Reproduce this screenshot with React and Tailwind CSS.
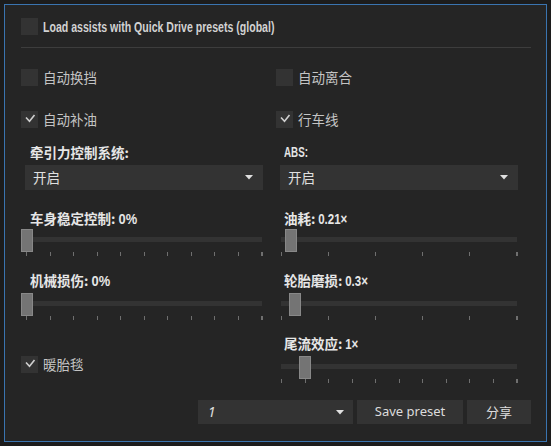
import React from 'react';

const lat = { fontFamily: '"Liberation Sans", Arial, sans-serif' };
const cjk = { fontFamily: '"Noto Sans CJK SC", "Noto Sans", sans-serif' };
const ui = { fontFamily: '"Noto Sans", "Noto Sans CJK SC", sans-serif' };

// condensed latin run, always at the end of a line
const Lat = ({ children, className = '' }) => (
  <span className={`inline-block origin-left whitespace-pre ${className}`} style={lat}>
    {children}
  </span>
);

const Check = ({ checked, label, header }) => (
  <div className="flex items-center h-[17px]">
    <div className="w-[17px] h-[17px] bg-[#333333] flex items-center justify-center shrink-0">
      {checked && (
        <svg width="17" height="17" viewBox="0 0 17 17">
          <path d="M5 6.5 L8.5 10.3 L13.5 4" fill="none" stroke="#cfcfcf" strokeWidth="1.6" />
        </svg>
      )}
    </div>
    {header ? (
      <span className="ml-[5px] text-[14px] leading-[17px] font-bold text-[#d2d2d2] whitespace-nowrap">
        <Lat className="scale-x-[0.755]">{label}</Lat>
      </span>
    ) : (
      <span className="ml-[5px] text-[13.5px] leading-[17px] text-[#c4c4c4] whitespace-nowrap" style={cjk}>
        {label}
      </span>
    )}
  </div>
);

const Label = ({ text, tail, squeeze = 'scale-x-[0.82]', className = '' }) => (
  <div className={`h-[16px] flex items-baseline text-[13.5px] leading-[16px] font-bold text-[#e6e6e6] whitespace-nowrap ${className}`} style={cjk}>
    {text && <span>{text}</span>}
    {tail && <Lat className={`text-[14px] leading-[16px] ${squeeze}`}>{tail}</Lat>}
  </div>
);

const Arrow = () => (
  <svg width="8" height="5" viewBox="0 0 8 5">
    <path d="M0 0 L8 0 L4 4.5 Z" fill="#e0e0e0" />
  </svg>
);

const Select = ({ value }) => (
  <div className="mx-[4px] h-[25px] bg-[#333333] flex items-center justify-between pl-[8px] pr-[10px]">
    <span className="text-[13.5px] text-[#e0e0e0]" style={cjk}>{value}</span>
    <Arrow />
  </div>
);

const Slider = ({ ticks, thumb }) => (
  <div className="relative h-[27px] w-full">
    <div className="absolute left-[5px] right-[5px] top-[8px] h-[5px] bg-[#333333]" />
    <div className="absolute left-[5px] right-[4px] top-[23px] h-[4px] flex justify-between">
      {Array.from({ length: ticks }).map((_, i) => (
        <div key={i} className={`h-[4px] bg-[#6f6f6f] ${i === ticks - 1 ? 'w-[2px]' : 'w-px'}`} />
      ))}
    </div>
    <div className={`absolute top-0 w-[12px] h-[23px] bg-[#747474] border border-[#888888] ${thumb}`} />
  </div>
);

const Row = ({ className = '', children }) => (
  <div className={`grid grid-cols-[246px_246px] gap-x-[9px] ${className}`}>{children}</div>
);

export default function App() {
  return (
    <div className="w-[551px] h-[446px] bg-[#1c1c1c] p-[4px]">
      <div className="h-full border border-[#3a74b0] bg-[#252525] pl-[16px] pr-[15px] pt-[13px]">
        <Check label="Load assists with Quick Drive presets (global)" header />
        <div className="mt-[12px] h-px bg-[#3d3d3d]" />

        <Row className="mt-[21px]">
          <Check label="自动换挡" />
          <Check label="自动离合" />
        </Row>
        <Row className="mt-[25px]">
          <Check label="自动补油" checked />
          <Check label="行车线" checked />
        </Row>

        <Row className="mt-[16px]">
          <div>
            <Label className="pl-[9px]" text="牵引力控制系统:" />
            <div className="mt-[5px]"><Select value="开启" /></div>
          </div>
          <div>
            <Label className="pl-[8px]" tail="ABS:" squeeze="scale-x-[0.7]" />
            <div className="mt-[5px]"><Select value="开启" /></div>
          </div>
        </Row>

        <Row className="mt-[20px]">
          <div>
            <Label className="pl-[9px]" text="车身稳定控制:" tail=" 0%" squeeze="scale-x-[0.92]" />
            <div className="mt-[3px]"><Slider ticks={11} thumb="left-[0px]" /></div>
          </div>
          <div>
            <Label className="pl-[8px]" text="油耗:" tail=" 0.21×" />
            <div className="mt-[3px]"><Slider ticks={6} thumb="left-[9px]" /></div>
          </div>
        </Row>

        <Row className="mt-[16px]">
          <div>
            <Label className="pl-[9px]" text="机械损伤:" tail=" 0%" squeeze="scale-x-[0.92]" />
            <div className="mt-[5px]"><Slider ticks={11} thumb="left-[0px]" /></div>
          </div>
          <div>
            <Label className="pl-[8px]" text="轮胎磨损:" tail=" 0.3×" />
            <div className="mt-[5px]"><Slider ticks={6} thumb="left-[13px]" /></div>
          </div>
        </Row>

        <Row className="mt-[15px]">
          <div className="pt-[21px]">
            <Check label="暖胎毯" checked />
          </div>
          <div>
            <Label className="pl-[8px]" text="尾流效应:" tail=" 1×" />
            <div className="mt-[5px]"><Slider ticks={11} thumb="left-[23px]" /></div>
          </div>
        </Row>

        <div className="mt-[17px] flex justify-end gap-[4px]">
          <div className="w-[155px] h-[24px] bg-[#333333] flex items-center justify-between pl-[10px] pr-[9px]">
            <span className="text-[13.5px] italic text-[#e0e0e0]" style={ui}>1</span>
            <Arrow />
          </div>
          <div className="w-[106px] h-[24px] bg-[#333333] flex items-center justify-center text-[13px] text-[#dcdcdc]" style={ui}>
            Save preset
          </div>
          <div className="w-[64px] h-[24px] bg-[#333333] flex items-center justify-center text-[13px] text-[#dcdcdc]" style={cjk}>
            分享
          </div>
        </div>
      </div>
    </div>
  );
}
